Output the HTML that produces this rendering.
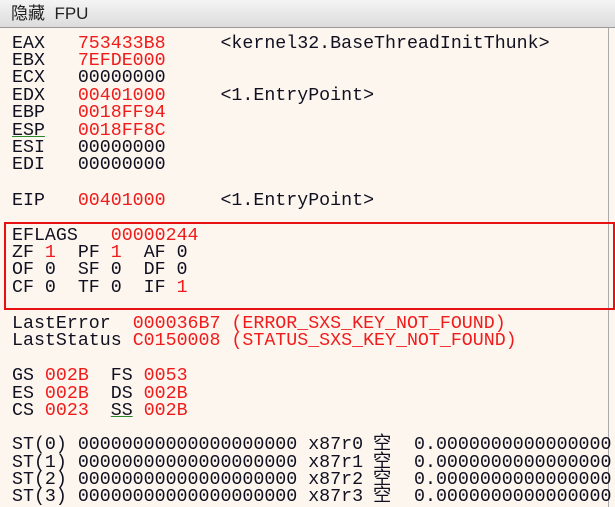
<!DOCTYPE html>
<html><head><meta charset="utf-8"><style>
body{margin:0;width:615px;height:507px;overflow:hidden;background:#fdf6ef;position:relative;font-family:"Liberation Mono","Noto Sans CJK SC",monospace;font-size:18.3px;color:#101020}
.hd{position:absolute;left:0;top:0;width:615px;height:28px;background:linear-gradient(#f4f4f4,#dcdcdc);border-bottom:1px solid #9a9a9a;font-family:"Liberation Sans","Noto Sans CJK SC",sans-serif;font-size:17px;line-height:28px;padding-left:11px;box-sizing:border-box;color:#222}
.l{position:absolute;white-space:pre;line-height:18px}
.r{color:#f01c1c}
.u{text-decoration:underline;text-decoration-color:#2a8a2a}
.box{position:absolute;left:4px;top:222px;width:607px;height:84px;border:2px solid #e81010}
.vl{position:absolute;left:608px;top:28px;width:1px;height:479px;background:#aaa}
</style></head><body>
<div class="hd">隐藏&nbsp; FPU</div>
<div class="vl"></div>
<div class="box"></div>
<div class="l" style="left:12px;top:35px">EAX   <span class="r">753433B8</span>     &lt;kernel32.BaseThreadInitThunk&gt;</div>
<div class="l" style="left:12px;top:52px">EBX   <span class="r">7EFDE000</span></div>
<div class="l" style="left:12px;top:69px">ECX   00000000</div>
<div class="l" style="left:12px;top:87px">EDX   <span class="r">00401000</span>     &lt;1.EntryPoint&gt;</div>
<div class="l" style="left:12px;top:104px">EBP   <span class="r">0018FF94</span></div>
<div class="l" style="left:12px;top:122px"><span class="u">ESP</span>   <span class="r">0018FF8C</span></div>
<div class="l" style="left:12px;top:139px">ESI   00000000</div>
<div class="l" style="left:12px;top:156px">EDI   00000000</div>
<div class="l" style="left:12px;top:192px">EIP   <span class="r">00401000</span>     &lt;1.EntryPoint&gt;</div>
<div class="l" style="left:12px;top:227px">EFLAGS   <span class="r">00000244</span></div>
<div class="l" style="left:12px;top:244px">ZF <span class="r">1</span>  PF <span class="r">1</span>  AF 0</div>
<div class="l" style="left:12px;top:261px">OF 0  SF 0  DF 0</div>
<div class="l" style="left:12px;top:279px">CF 0  TF 0  IF <span class="r">1</span></div>
<div class="l" style="left:12px;top:315px">LastError  <span class="r">000036B7 (ERROR_SXS_KEY_NOT_FOUND)</span></div>
<div class="l" style="left:12px;top:332px">LastStatus <span class="r">C0150008 (STATUS_SXS_KEY_NOT_FOUND)</span></div>
<div class="l" style="left:12px;top:367px">GS <span class="r">002B</span>  FS <span class="r">0053</span></div>
<div class="l" style="left:12px;top:385px">ES <span class="r">002B</span>  DS <span class="r">002B</span></div>
<div class="l" style="left:12px;top:402px">CS <span class="r">0023</span>  <span class="u">SS</span> <span class="r">002B</span></div>
<div class="l" style="left:12px;top:436px">ST(0) 00000000000000000000 x87r0</div>
<div class="l" style="left:12px;top:454px">ST(1) 00000000000000000000 x87r1</div>
<div class="l" style="left:12px;top:471px">ST(2) 00000000000000000000 x87r2</div>
<div class="l" style="left:12px;top:488px">ST(3) 00000000000000000000 x87r3</div>
<div class="l" style="left:373px;top:436px">空</div>
<div class="l" style="left:373px;top:454px">空</div>
<div class="l" style="left:373px;top:471px">空</div>
<div class="l" style="left:373px;top:488px">空</div>
<div class="l" style="left:414px;top:436px">0.0000000000000000</div>
<div class="l" style="left:414px;top:454px">0.0000000000000000</div>
<div class="l" style="left:414px;top:471px">0.0000000000000000</div>
<div class="l" style="left:414px;top:488px">0.0000000000000000</div>
</body></html>
